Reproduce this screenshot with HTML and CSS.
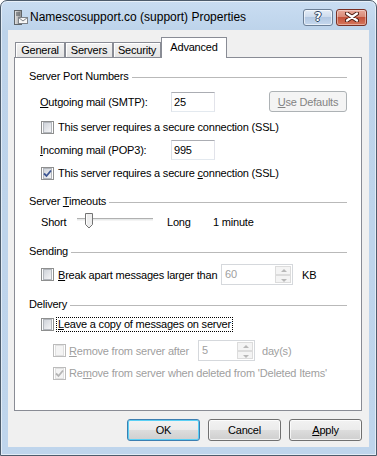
FILE: index.html
```html
<!doctype html>
<html>
  <head>
    <meta charset="utf-8">
    <title>Namescosupport.co (support) Properties</title>
    <link rel="stylesheet" href="styles.css">
</head>
<body>

<div class="window">
  <div class="titlebar">
    <svg class="appIcon" width="15" height="17" viewBox="0 0 15 17">
      <defs>
        <linearGradient id="tower" x1="0" y1="0" x2="1" y2="0">
          <stop offset="0" stop-color="#e6e6e6"/>
          <stop offset="1" stop-color="#8c8c8c"/>
        </linearGradient>
      </defs>
      <rect x="1.5" y="1.5" width="7" height="14" fill="url(#tower)" stroke="#5f6468"/>
      <line x1="3" y1="4" x2="7" y2="4" stroke="#4b5055"/>
      <line x1="3" y1="6" x2="7" y2="6" stroke="#4b5055"/>
      <rect x="5.5" y="8.5" width="9" height="6" fill="#f6f6f6" stroke="#7d8288"/>
      <path d="M5.5 8.5 L10 12 L14.5 8.5" fill="none" stroke="#7d8288"/>
    </svg>
    <span class="title">Namescosupport.co (support) Properties</span>
    <div class="captionButtons">
      <div class="capBtn help"><span>?</span></div>
      <div class="capBtn close">
        <svg width="14" height="10" viewBox="0 0 14 10">
          <path d="M2 1.5 L12 8.5 M12 1.5 L2 8.5" stroke="#4a1b12" stroke-width="4.2" stroke-linecap="round"/>
          <path d="M2 1.5 L12 8.5 M12 1.5 L2 8.5" stroke="#fff" stroke-width="2.2" stroke-linecap="round"/>
        </svg>
      </div>
    </div>
  </div>

  <div class="client">
    <div class="tabs">
      <div class="tab general">General</div>
      <div class="tab servers">Servers</div>
      <div class="tab security">Security</div>
      <div class="tab active">Advanced</div>
    </div>

    <div class="panel">
      <div class="groupHead headPorts"><span>Server Port Numbers</span></div>
      <div class="row portRow outgoing">
        <span class="portLabel"><u>O</u>utgoing mail (SMTP):</span>
        <span class="edit">25</span>
        <span class="btnDisabled"><u>U</u>se Defaults</span>
      </div>
      <div class="row checkRow ssl1">
        <span class="cb"></span>
        <span class="cbLabel">This server requires a secure connection (SSL)</span>
      </div>
      <div class="row portRow incoming">
        <span class="portLabel"><u>I</u>ncoming mail (POP3):</span>
        <span class="edit">995</span>
      </div>
      <div class="row checkRow ssl2">
        <span class="cb checked">
          <svg width="9" height="9" viewBox="0 0 9 9"><path d="M1 4.5 L3.5 7 L8 1.5" fill="none" stroke="#3d5693" stroke-width="1.8"/></svg>
        </span>
        <span class="cbLabel">This server requires a secure <u>c</u>onnection (SSL)</span>
      </div>

      <div class="groupHead headTimeouts"><span>Server <u>T</u>imeouts</span></div>
      <div class="row sliderRow">
        <span class="short">Short</span>
        <svg class="slider" width="84" height="18" viewBox="0 0 84 18">
          <rect x="4" y="5" width="76" height="3" fill="#e7eaea"/>
          <line x1="4" y1="5.5" x2="80" y2="5.5" stroke="#b0b0b0"/>
          <line x1="4" y1="7.5" x2="80" y2="7.5" stroke="#f4f4f4"/>
          <path d="M12.5 0.5 H19.5 V11.5 L16 15 L12.5 11.5 Z" fill="#eeeeee" stroke="#747474"/>
          <line x1="13.5" y1="1.5" x2="13.5" y2="11" stroke="#ffffff"/>
        </svg>
        <span class="long">Long</span>
        <span>1 minute</span>
      </div>

      <div class="groupHead headSending"><span>Sending</span></div>
      <div class="row breakRow">
        <span class="cb"></span>
        <span class="cbLabel breakLabel"><u>B</u>reak apart messages larger than</span>
        <span class="spin spin60">
          <span class="spinText">60</span>
          <span class="spinArrows"><span class="up"></span><span class="down"></span></span>
        </span>
        <span class="kb">KB</span>
      </div>

      <div class="groupHead headDelivery"><span>Delivery</span></div>
      <div class="row checkRow leaveRow">
        <span class="cb"></span>
        <span class="focus"><u>L</u>eave a copy of messages on server</span>
      </div>
      <div class="row checkRow removeAfter indent disabled">
        <span class="cb"></span>
        <span class="cbLabel removeLabel"><u>R</u>emove from server after</span>
        <span class="spin spin5">
          <span class="spinText">5</span>
          <span class="spinArrows"><span class="up"></span><span class="down"></span></span>
        </span>
        <span class="days">day(s)</span>
      </div>
      <div class="row checkRow removeDeleted indent disabled">
        <span class="cb checked">
          <svg width="9" height="9" viewBox="0 0 9 9"><path d="M1 4.5 L3.5 7 L8 1.5" fill="none" stroke="#b4b4b4" stroke-width="1.8"/></svg>
        </span>
        <span class="cbLabel">Re<u>m</u>ove from server when deleted from 'Deleted Items'</span>
      </div>
    </div>

    <div class="buttons">
      <div class="btn default">OK</div>
      <div class="btn">Cancel</div>
      <div class="btn"><u>A</u>pply</div>
    </div>
  </div>
</div>

</body>
</html>
```

FILE: styles.css
```css
*{
  box-sizing: border-box;
}
body{
  margin: 0;
  padding: 0;
  background-color: #fff;
  font-family: "Liberation Sans", Arial, sans-serif;
  font-size: 11px;
  letter-spacing: -0.2px;
  color: #000;
}
u{
  text-decoration: underline;
  text-underline-offset: 1px;
}
.window{
  width: 377px;
  height: 456px;
  border: 1px solid #4d5c6c;
  border-radius: 7px 7px 0 0;
  background: linear-gradient(#c9ddf2, #bdd3ea 30px, #bfd5ec);
  box-shadow: inset 0 0 0 1px rgba(255,255,255,0.55);
  padding: 0 7px 8px 7px;
  display: flex;
  flex-direction: column;
}

/* title bar */
.titlebar{
  height: 29px;
  display: flex;
  align-items: center;
  padding: 3px 0 0 5px;
}
.appIcon{
  display: block;
  margin-right: 2px;
}
.title{
  font-size: 12px;
  letter-spacing: 0;
  color: #000;
}
.captionButtons{
  margin-left: auto;
  margin-right: 2px;
  display: flex;
  gap: 3px;
}
.capBtn{
  height: 17px;
  border-radius: 3px;
  display: flex;
  align-items: center;
  justify-content: center;
}
.capBtn.help{
  width: 30px;
  border: 1px solid #6c7f96;
  background: linear-gradient(#e4edf7 0%, #cedced 45%, #b3c8e2 50%, #c6d8ee 100%);
  box-shadow: inset 0 0 0 1px rgba(255,255,255,0.6);
}
.capBtn.help span{
  font-family: "DejaVu Sans", sans-serif;
  font-weight: bold;
  font-size: 12px;
  color: #fff;
  text-shadow: 1px 0 0 #2f4460, -1px 0 0 #2f4460, 0 1px 0 #2f4460, 0 -1px 0 #2f4460;
  line-height: 15px;
}
.capBtn.close{
  width: 31px;
  border: 1px solid #7a3024;
  background: linear-gradient(#e9a99b 0%, #d88a78 45%, #c4523b 50%, #d5765c 100%);
  box-shadow: inset 0 0 0 1px rgba(255,255,255,0.4);
}
.capBtn svg{
  display: block;
}

/* client */
.client{
  flex: 1;
  background-color: #f0f0f0;
  padding: 7px 7px 0 6px;
  display: flex;
  flex-direction: column;
}
.tabs{
  display: flex;
  align-items: flex-end;
  height: 20px;
  padding-left: 1px;
}
.tab{
  height: 15px;
  border: 1px solid #898c95;
  border-bottom: none;
  background: linear-gradient(#f3f3f3, #e4e4e4);
  box-shadow: inset 1px 1px 0 #fff;
  text-align: center;
  line-height: 14px;
}
.tab.general{
  width: 50px;
}
.tab.servers{
  width: 48px;
}
.tab.security{
  width: 48px;
}
.tab.active{
  width: 66px;
  height: 21px;
  margin-bottom: -1px;
  background: #fff;
  box-shadow: none;
  line-height: 19px;
  position: relative;
  z-index: 1;
}
.panel{
  height: 354px;
  background-color: #fff;
  border: 1px solid #898c95;
  padding: 0 14px;
}

/* group boxes */
.groupHead{
  display: flex;
  align-items: center;
  height: 14px;
}
.groupHead::after{
  content: "";
  flex: 1;
  height: 1px;
  margin: 2px 0 0 3px;
  background-color: #b9b9b9;
}
.headPorts{
  margin-top: 11px;
}
.headTimeouts{
  margin-top: 14px;
}
.headSending{
  margin-top: 13px;
}
.headDelivery{
  margin-top: 12px;
}
.row{
  display: flex;
  align-items: center;
  padding-left: 11px;
}
.portRow{
  height: 21px;
}
.checkRow{
  height: 14px;
}
.outgoing{
  margin-top: 8px;
}
.ssl1{
  margin-top: 8px;
}
.incoming{
  margin-top: 5px;
}
.ssl2{
  margin-top: 6px;
}
.portLabel{
  width: 131px;
}
.edit{
  width: 44px;
  height: 20px;
  border: 1px solid;
  border-color: #abadb3 #e2e3ea #e3e9ef #dbdfe6;
  background-color: #fff;
  padding-left: 2px;
  line-height: 18px;
}
.btnDisabled{
  margin-left: auto;
  width: 78px;
  height: 21px;
  border: 1px solid #adb2b5;
  border-radius: 3px;
  background-color: #f4f4f4;
  color: #838383;
  display: flex;
  align-items: center;
  justify-content: center;
}

/* checkboxes */
.cb{
  width: 13px;
  height: 13px;
  margin-left: 1px;
  border: 1px solid #8e8f8f;
  background-color: #fff;
  padding: 1px;
  display: flex;
  align-items: center;
  justify-content: center;
  flex: none;
}
.cb::before{
  content: "";
  width: 9px;
  height: 9px;
  background: linear-gradient(135deg, #cfd3d9, #f4f4f6);
  border: 1px solid #b2b6bc;
}
.cb.checked{
  position: relative;
}
.cb.checked svg{
  position: absolute;
  left: 1px;
  top: 1px;
}
.cbLabel{
  margin-left: 4px;
}
.disabled{
  color: #a0a0a0;
}
.disabled .cb{
  border-color: #bcbcbc;
}
.disabled .cb::before{
  background: #f4f4f4;
  border-color: #e0e0e0;
}

/* slider */
.sliderRow{
  margin-top: 5px;
  height: 18px;
  padding-left: 12px;
}
.short{
  width: 32px;
}
.slider{
  display: block;
}
.long{
  width: 46px;
  margin-left: 10px;
}

/* spinners */
.breakRow{
  margin-top: 6px;
  height: 21px;
}
.breakLabel{
  width: 163px;
}
.spin{
  height: 21px;
  border: 1px solid #d5d8dc;
  background-color: #fff;
  display: flex;
  color: #a0a0a0;
}
.spin60{
  width: 72px;
}
.spin5{
  width: 57px;
}
.spinText{
  flex: 1;
  padding-left: 3px;
  line-height: 19px;
}
.spinArrows{
  width: 17px;
  display: flex;
  flex-direction: column;
  padding: 1px 1px 1px 0;
}
.spinArrows span{
  flex: 1;
  border: 1px solid #dcdcdc;
  background-color: #f4f4f4;
  position: relative;
}
.spinArrows .up::after,
.spinArrows .down::after{
  content: "";
  position: absolute;
  left: 5px;
  border-left: 3px solid transparent;
  border-right: 3px solid transparent;
}
.spinArrows .up::after{
  top: 2px;
  border-bottom: 3px solid #b8b8b8;
}
.spinArrows .down::after{
  top: 3px;
  border-top: 3px solid #b8b8b8;
}
.kb{
  margin-left: 9px;
}
.leaveRow{
  margin-top: 6px;
  height: 15px;
}
.focus{
  margin-left: 2px;
  height: 15px;
  border: 1px dotted #000;
  padding: 0 1px;
  line-height: 13px;
}
.indent{
  padding-left: 23px;
}
.indent .cbLabel{
  margin-left: 3px;
}
.removeAfter{
  margin-top: 8px;
  height: 21px;
}
.removeLabel{
  width: 129px;
}
.days{
  margin-left: 7px;
}
.removeDeleted{
  margin-top: 5px;
}

/* bottom buttons */
.buttons{
  display: flex;
  justify-content: flex-end;
  gap: 8px;
  margin-top: 8px;
}
.btn{
  width: 73px;
  height: 22px;
  border: 1px solid #707070;
  border-radius: 3px;
  background: linear-gradient(#f2f2f2 0%, #ebebeb 50%, #dddddd 50%, #cfcfcf 100%);
  box-shadow: inset 0 0 0 1px rgba(255,255,255,0.75);
  display: flex;
  align-items: center;
  justify-content: center;
}
.btn.default{
  border-color: #3c7fb1;
  box-shadow: inset 0 0 0 1px #5ad0f5;
}
```
